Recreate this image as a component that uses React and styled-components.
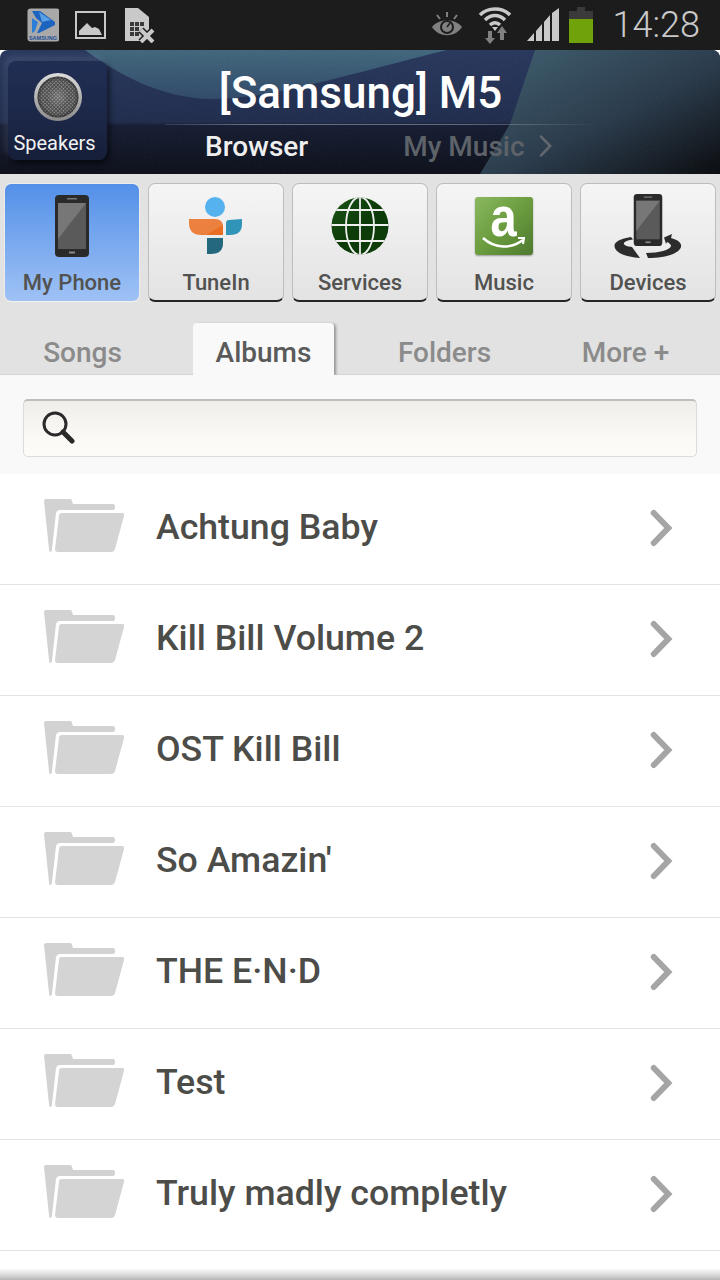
import React from "react";
import styled, { createGlobalStyle } from "styled-components";

const GlobalStyle = createGlobalStyle`
  html, body {
    margin: 0;
    padding: 0;
    background: #fff;
    font-family: Roboto, "Liberation Sans", sans-serif;
  }
  * { box-sizing: border-box; }
`;

const Page = styled.div`
  width: 720px;
  height: 1280px;
  overflow: hidden;
  display: flex;
  flex-direction: column;
  background: #fff;
`;

/* status bar */
const StatusBar = styled.div`
  height: 50px;
  flex: none;
  background: #1c1c1c;
  display: flex;
  align-items: center;
  padding: 0 20px 0 27px;
`;

const StatusLeft = styled.div`
  display: flex;
  align-items: center;
  gap: 16px;
`;

const StatusRight = styled.div`
  margin-left: auto;
  display: flex;
  align-items: center;
  gap: 15px;
`;

const BatterySlot = styled.div`
  display: flex;
  margin-left: -5px;
`;

const Clock = styled.span`
  font-size: 36px;
  font-weight: 300;
  color: #c9c9c9;
  margin-left: 5px;
  line-height: 50px;
`;

/* header */
const Header = styled.header`
  position: relative;
  height: 124px;
  flex: none;
  display: flex;
  overflow: hidden;
  border-radius: 8px 8px 0 0;
  background: linear-gradient(180deg, #27365c 0%, #1e2b4c 58%, #141b31 61%, #0b0e18 100%);
`;

const HeaderArt = styled.svg`
  position: absolute;
  inset: 0;
`;

const SpeakerTile = styled.div`
  position: relative;
  width: 99px;
  height: 99px;
  margin: 11px 0 0 8px;
  flex: none;
  border-radius: 8px;
  background: linear-gradient(180deg, #212e54 0%, #1c2747 60%, #161e38 100%);
  box-shadow: 2px 3px 6px rgba(0, 0, 0, 0.65), -3px -4px 6px rgba(130, 150, 190, 0.25);
  display: flex;
  flex-direction: column;
  align-items: center;
  padding-top: 12px;
`;

const SpeakerLabel = styled.span`
  font-size: 20px;
  color: #f2f2f2;
  margin: 9px 6px 0 0;
  line-height: 26px;
  white-space: nowrap;
`;

const HeaderCenter = styled.div`
  position: relative;
  margin-left: 58px;
  width: 435px;
  display: flex;
  flex-direction: column;
`;

const DeviceTitle = styled.h1`
  margin: 14px 44px 0 0;
  height: 60px;
  text-align: center;
  font-size: 44px;
  font-weight: 500;
  line-height: 58px;
  color: #fff;
  white-space: nowrap;
`;

const HeaderRule = styled.div`
  height: 1px;
  background: linear-gradient(90deg, rgba(255,255,255,0.1), rgba(255,255,255,0.35) 20%, rgba(255,255,255,0.3) 70%, rgba(255,255,255,0));
`;

const SourceRow = styled.div`
  display: flex;
  align-items: center;
  padding: 0 0 2px 40px;
  height: 44px;
`;

const SourceLink = styled.span`
  font-size: 28px;
  font-weight: 500;
  color: ${({ $active }) => ($active ? "#efefef" : "#5e6269")};
  margin-right: ${({ $active }) => ($active ? "95px" : "13px")};
  white-space: nowrap;
`;

/* source tiles */
const TileBar = styled.nav`
  background: #e2e2e2;
  flex: none;
  height: 146px;
  padding: 9px 4px 0;
  display: flex;
  gap: 8px;
`;

const Tile = styled.div`
  width: 136px;
  height: 119px;
  border-radius: 7px;
  display: flex;
  flex-direction: column;
  align-items: center;
  background: ${({ $active }) =>
    $active
      ? "linear-gradient(180deg, #5390e8 0%, #9fc2f5 100%)"
      : "linear-gradient(180deg, #f5f5f5 0%, #e3e3e3 100%)"};
  background-clip: ${({ $active }) => ($active ? "padding-box" : "border-box")};
  border: 1px solid ${({ $active }) => ($active ? "rgba(255,255,255,0.35)" : "#bdbdbd")};
  border-bottom: ${({ $active }) => ($active ? "1px solid rgba(255,255,255,0.5)" : "2px solid #262626")};
`;

const TileIcon = styled.div`
  height: 72px;
  margin-top: 6px;
  display: flex;
  align-items: center;
  justify-content: center;
`;

const TileLabel = styled.span`
  font-size: 22px;
  line-height: 28px;
  margin-top: 7px;
  font-weight: 500;
  color: #525250;
  white-space: nowrap;
`;

const AmazonBadge = styled.div`
  position: relative;
  width: 58px;
  height: 58px;
  border-radius: 3px;
  display: flex;
  justify-content: center;
  background: linear-gradient(135deg, #8ab860 0%, #6b9c3e 50%, #4e7a30 100%);
  box-shadow: 0 1px 2px rgba(0, 0, 0, 0.35);
`;

const AmazonLetter = styled.span`
  font-family: "Liberation Sans", sans-serif;
  font-size: 56px;
  font-weight: 700;
  line-height: 40px;
  height: 40px;
  color: #fff;
  transform: scaleX(0.85);
`;

const AmazonSmile = styled.svg`
  position: absolute;
  left: 0;
  top: 0;
`;

/* tabs */
const TabBar = styled.div`
  flex: none;
  height: 55px;
  background: #e2e2e2;
  border-bottom: 1px solid #d5d5d5;
  padding: 0 12px;
  display: flex;
  gap: 40px;
`;

const Tab = styled.div`
  width: 141px;
  height: ${({ $active }) => ($active ? "53px" : "54px")};
  margin-top: 3px;
  display: flex;
  align-items: center;
  justify-content: center;
  font-size: 28px;
  font-weight: 500;
  padding-top: ${({ $active }) => ($active ? "6px" : "4px")};
  color: ${({ $active }) => ($active ? "#5a5a5a" : "#8b8b8b")};
  background: ${({ $active }) => ($active ? "#f9f9f9" : "transparent")};
  border-radius: 4px 4px 0 0;
  box-shadow: ${({ $active }) => ($active ? "3px 0 3px -1px rgba(0,0,0,0.35)" : "none")};
`;

const SearchArea = styled.div`
  flex: none;
  height: 99px;
  background: #f9f9f9;
  padding: 24px 23px 0;
`;

const SearchBox = styled.div`
  height: 58px;
  border-radius: 5px;
  background: linear-gradient(180deg, #efeeea 0%, #fbfaf6 70%, #fcfbf8 100%);
  border: 1px solid #dcdcd9;
  border-top: 2px solid #bdbdb9;
  display: flex;
  align-items: center;
  padding: 0 0 4px 17px;
`;

/* list */
const AlbumList = styled.ul`
  list-style: none;
  margin: 0;
  padding: 0;
`;

const AlbumRow = styled.li`
  height: 111px;
  border-bottom: 1px solid #e3e3e3;
  display: flex;
  align-items: center;
  padding: 0 44px 4px;
`;

const AlbumFolder = styled.div`
  display: flex;
  flex: none;
  margin-top: -2px;
`;

const AlbumChevron = styled.div`
  display: flex;
  flex: none;
  margin-top: 2px;
`;

const AlbumName = styled.span`
  font-size: 35.7px;
  font-weight: 500;
  color: #4c4c49;
  margin-left: 32px;
  flex: 1;
  white-space: nowrap;
`;

const BottomFade = styled.div`
  margin-top: auto;
  height: 12px;
  flex: none;
  background: linear-gradient(180deg, #ffffff 0%, #d8d8d8 60%, #b4b4b4 100%);
`;

const SamsungIcon = () => (
  <svg width="32" height="34" viewBox="0 0 32 34">
    <rect x="0.5" y="0.5" width="32" height="33" rx="3" fill="#a9a9a9" />
    <path d="M5 3 L13 3 L28 14 L28 17 L12 25 L10 25 L15 15 L9 10 Z" fill="#1d63c0" />
    <path d="M12 4 L24 12 L15 14 Z" fill="#58a0e4" />
    <path d="M5 10 L11 14 L8 23 L5 25 Z" fill="#2c7ed6" />
    <text x="16" y="32" textAnchor="middle" fontSize="5.5" fontWeight="700" fontFamily="'Liberation Sans', sans-serif" fill="#1d4c94">SAMSUNG</text>
  </svg>
);

const PictureIcon = () => (
  <svg width="31" height="29" viewBox="0 0 31 29">
    <rect x="1" y="1" width="29" height="26" fill="none" stroke="#c9c9c9" strokeWidth="2" />
    <path d="M4 24 L4 20 L9 15 L12 12 L17 17 L20 16 L24 18 L27 24 Z" fill="#c9c9c9" />
  </svg>
);

const NoSimIcon = () => (
  <svg width="33" height="36" viewBox="-3 0 33 36">
    <path d="M0 1 L13 1 L24 10 L24 34 L0 34 Z" fill="#c9c9c9" />
    <g fill="#3a3a3a">
      <rect x="5" y="15" width="4" height="4" />
      <rect x="10" y="15" width="4" height="4" />
      <rect x="15" y="15" width="4" height="4" />
      <rect x="5" y="20" width="4" height="4" />
      <rect x="10" y="20" width="4" height="4" />
      <rect x="5" y="25" width="4" height="4" />
      <rect x="10" y="25" width="4" height="4" />
    </g>
    <path d="M16 23 L28 35 M28 23 L16 35" stroke="#1c1c1c" strokeWidth="7" />
    <path d="M16 23 L28 35 M28 23 L16 35" stroke="#c9c9c9" strokeWidth="4" />
  </svg>
);

const EyeIcon = () => (
  <svg width="32" height="26" viewBox="0 0 32 26">
    <path d="M1 15 C8 6 24 6 31 15 C24 26 8 26 1 15 Z" fill="#808080" />
    <circle cx="16" cy="15" r="7" fill="#1c1c1c" />
    <circle cx="16" cy="15" r="5" fill="#808080" />
    <path d="M16 15 L19 11" stroke="#1c1c1c" strokeWidth="1.5" />
    <path d="M16 0 L16 5 M6 3 L9 7 M26 3 L23 7" stroke="#808080" strokeWidth="2" />
  </svg>
);

const WifiIcon = () => (
  <svg width="34" height="38" viewBox="0 0 34 38">
    <g fill="none" stroke="#c9c9c9" strokeWidth="3.5">
      <path d="M2 9 C10 1 24 1 32 9" />
      <path d="M7 14 C13 8 21 8 27 14" />
      <path d="M12 19 C15 16 19 16 22 19" />
    </g>
    <path d="M17 25 L14 21 L20 21 Z" fill="#c9c9c9" />
    <path d="M12 38 L7 32 L10 32 L10 25 L14 25 L14 32 L17 32 Z" fill="#808080" />
    <path d="M24 20 L29 27 L26 27 L26 34 L22 34 L22 27 L19 27 Z" fill="#808080" />
  </svg>
);

const SignalIcon = () => (
  <svg width="32" height="34" viewBox="0 0 32 34">
    <path d="M0 33 L7 25 L7 33 Z M9 23 L15 16 L15 33 L9 33 Z M17 14 L23 7 L23 33 L17 33 Z M25 5 L32 0 L32 33 L25 33 Z" fill="#c9c9c9" />
  </svg>
);

const BatteryIcon = () => (
  <svg width="24" height="36" viewBox="0 0 24 36">
    <rect x="8" y="0" width="8" height="4" fill="#3a3a3a" />
    <rect x="0" y="4" width="24" height="32" fill="#3a3a3a" />
    <rect x="0" y="12" width="24" height="24" fill="#70a30a" />
  </svg>
);

const SpeakerIcon = () => (
  <svg width="48" height="48" viewBox="0 0 48 48">
    <defs>
      <pattern id="mesh" width="2.6" height="2.6" patternUnits="userSpaceOnUse" patternTransform="rotate(45)">
        <rect width="2.6" height="2.6" fill="#3c3c3c" />
        <rect width="1.5" height="1.5" fill="#8c8c8c" />
      </pattern>
      <linearGradient id="ring" x1="0" y1="0" x2="0" y2="1">
        <stop offset="0" stopColor="#dcdcdc" />
        <stop offset="1" stopColor="#8a8a8a" />
      </linearGradient>
      <radialGradient id="glow">
        <stop offset="0" stopColor="#fff" stopOpacity="0.25" />
        <stop offset="0.6" stopColor="#fff" stopOpacity="0.05" />
        <stop offset="1" stopColor="#000" stopOpacity="0.35" />
      </radialGradient>
    </defs>
    <circle cx="24" cy="24" r="24" fill="url(#ring)" />
    <circle cx="24" cy="24" r="20.5" fill="url(#mesh)" />
    <circle cx="24" cy="24" r="20.5" fill="url(#glow)" />
  </svg>
);

const PhoneIcon = ({ width = 34, height = 62 }) => (
  <svg width={width} height={height} viewBox="0 0 34 62">
    <rect x="0" y="0" width="34" height="62" rx="4" fill="#2a2a2a" />
    <rect x="3" y="8" width="28" height="46" fill="#5a5a5a" />
    <path d="M3 8 L31 8 L3 44 Z" fill="#777" />
    <rect x="12" y="3" width="10" height="1.5" fill="#777" />
    <rect x="14" y="56.5" width="6" height="2" fill="#888" />
  </svg>
);

const TuneInIcon = () => (
  <svg width="56" height="60" viewBox="0 0 56 60">
    <circle cx="27" cy="11" r="10" fill="#56b1ef" />
    <path d="M1 23 L27 23 Q35 23 35 31 L35 39 L13 39 Q1 39 1 27 Z" fill="#ec813f" />
    <path d="M18 39 L35 39 L35 29 Z" fill="#e96d22" />
    <path d="M38 27 Q38 24 41 24 L54 23 L54 28 Q54 39 42 39 L38 39 Z" fill="#3094b8" />
    <path d="M19 42 L35 42 L35 47 Q35 58 23 58 L19 58 Z" fill="#23687c" />
  </svg>
);

const GlobeIcon = () => (
  <svg width="58" height="58" viewBox="0 0 58 58">
    <defs>
      <clipPath id="globe"><circle cx="29" cy="29" r="28.5" /></clipPath>
      <linearGradient id="globeFill" x1="0" y1="0" x2="1" y2="1">
        <stop offset="0" stopColor="#1d5518" />
        <stop offset="0.5" stopColor="#0c3a08" />
        <stop offset="1" stopColor="#0f3d0a" />
      </linearGradient>
    </defs>
    <circle cx="29" cy="29" r="28.5" fill="url(#globeFill)" />
    <g clipPath="url(#globe)" fill="none" stroke="#efefef" strokeWidth="1.8">
      <path d="M29 0 L29 58" />
      <path d="M0 28 L58 28" />
      <path d="M3 13 L55 13" />
      <path d="M3 44 L55 44" />
      <ellipse cx="29" cy="29" rx="14" ry="29" />
    </g>
  </svg>
);

const AmazonIcon = () => (
  <AmazonBadge>
    <AmazonLetter>a</AmazonLetter>
    <AmazonSmile width="58" height="58" viewBox="0 0 58 58">
      <path d="M8 41 C20 52 36 52 48 43" fill="none" stroke="#fff" strokeWidth="2.5" />
      <path d="M43 41 L49 41 L48 47" fill="none" stroke="#fff" strokeWidth="2" />
    </AmazonSmile>
  </AmazonBadge>
);

const DevicesIcon = () => (
  <svg width="68" height="66" viewBox="0 0 68 66">
    <path d="M17 44 C6 46 0 49 0.5 53 C1 60 12 64 26 65 L18 54 C13 54 9 52 10 50 C11 48 15 47 19 46.5 Z" fill="#2c2c2c" />
    <path d="M50 44.5 L58 41 L57 45 C64 47 68 50 67 54 C65 61 50 65 34 65 L32 60 C45 60 56 57 57 53 C57 51 55 50 53 49 L52 51 Z" fill="#2c2c2c" />
    <g transform="translate(19 1)">
      <PhoneIcon width={30} height={52} />
    </g>
  </svg>
);

const SearchIcon = () => (
  <svg width="34" height="34" viewBox="0 0 34 34">
    <circle cx="14" cy="14" r="11" fill="none" stroke="#2a2a2a" strokeWidth="3" />
    <path d="M22 22 L31 31" stroke="#2a2a2a" strokeWidth="5" strokeLinecap="round" />
  </svg>
);

const FolderIcon = () => (
  <svg width="80" height="54" viewBox="0 0 80 54">
    <path d="M0 2 Q0 0 2 0 L26 0 Q28 0 28 2 L29 5 L69 5 Q71 5 71 8 Q71 11 69 11 L16 11 Q13 11 12 14 L8 50 Q8 53 6 53 Q5 53 5 50 Z" fill="#d2d2d2" />
    <path d="M18 14 L78 14 Q81 14 80 17 L71 50 Q70 53 67 53 L14 53 Q11 53 11 50 L15 17 Q15 14 18 14 Z" fill="#d4d4d4" />
  </svg>
);

const Chevron = ({ size = 38, color = "#a5a5a5", width = 6 }) => (
  <svg width={size * 0.7} height={size} viewBox="0 0 26 38">
    <path d="M4.5 4 L19 19 L4.5 34" fill="none" stroke={color} strokeWidth={width} strokeLinecap="round" strokeLinejoin="miter" />
  </svg>
);

const tiles = [
  { label: "My Phone", icon: <PhoneIcon />, active: true },
  { label: "TuneIn", icon: <TuneInIcon /> },
  { label: "Services", icon: <GlobeIcon /> },
  { label: "Music", icon: <AmazonIcon /> },
  { label: "Devices", icon: <DevicesIcon /> },
];

const tabs = ["Songs", "Albums", "Folders", "More +"];

const albums = [
  "Achtung Baby",
  "Kill Bill Volume 2",
  "OST Kill Bill",
  "So Amazin'",
  "THE E·N·D",
  "Test",
  "Truly madly completly",
];

export default function App() {
  return (
    <Page>
      <GlobalStyle />
      <StatusBar>
        <StatusLeft>
          <SamsungIcon />
          <PictureIcon />
          <NoSimIcon />
        </StatusLeft>
        <StatusRight>
          <EyeIcon />
          <WifiIcon />
          <SignalIcon />
          <BatterySlot>
            <BatteryIcon />
          </BatterySlot>
          <Clock>14:28</Clock>
        </StatusRight>
      </StatusBar>

      <Header>
        <HeaderArt width="720" height="124" viewBox="0 0 720 124">
          <defs>
            <linearGradient id="teal" x1="0" y1="0" x2="0" y2="1">
              <stop offset="0" stopColor="#40667c" />
              <stop offset="1" stopColor="#2f4868" />
            </linearGradient>
            <linearGradient id="right" x1="0" y1="0" x2="1" y2="1">
              <stop offset="0" stopColor="#3e5f70" />
              <stop offset="0.55" stopColor="#28394a" />
              <stop offset="1" stopColor="#07090c" />
            </linearGradient>
            <filter id="grain">
              <feTurbulence type="fractalNoise" baseFrequency="0.9" numOctaves="2" />
              <feColorMatrix type="saturate" values="0" />
            </filter>
          </defs>
          <path d="M85 0 C115 22 160 49 213 49 C270 49 350 24 447 0 Z" fill="url(#teal)" />
          <path d="M535 0 L720 0 L720 124 L480 124 L510 74 Z" fill="url(#right)" />
          <rect width="720" height="124" filter="url(#grain)" opacity="0.06" />
        </HeaderArt>
        <SpeakerTile>
          <SpeakerIcon />
          <SpeakerLabel>Speakers</SpeakerLabel>
        </SpeakerTile>
        <HeaderCenter>
          <DeviceTitle>[Samsung] M5</DeviceTitle>
          <HeaderRule />
          <SourceRow>
            <SourceLink $active>Browser</SourceLink>
            <SourceLink>My Music</SourceLink>
            <Chevron size={24} color="#63676e" width={4} />
          </SourceRow>
        </HeaderCenter>
      </Header>

      <TileBar>
        {tiles.map((tile) => (
          <Tile key={tile.label} $active={tile.active}>
            <TileIcon>{tile.icon}</TileIcon>
            <TileLabel>{tile.label}</TileLabel>
          </Tile>
        ))}
      </TileBar>

      <TabBar>
        {tabs.map((tab) => (
          <Tab key={tab} $active={tab === "Albums"}>{tab}</Tab>
        ))}
      </TabBar>

      <SearchArea>
        <SearchBox>
          <SearchIcon />
        </SearchBox>
      </SearchArea>

      <AlbumList>
        {albums.map((album) => (
          <AlbumRow key={album}>
            <AlbumFolder>
              <FolderIcon />
            </AlbumFolder>
            <AlbumName>{album}</AlbumName>
            <AlbumChevron>
              <Chevron />
            </AlbumChevron>
          </AlbumRow>
        ))}
      </AlbumList>

      <BottomFade />
    </Page>
  );
}
